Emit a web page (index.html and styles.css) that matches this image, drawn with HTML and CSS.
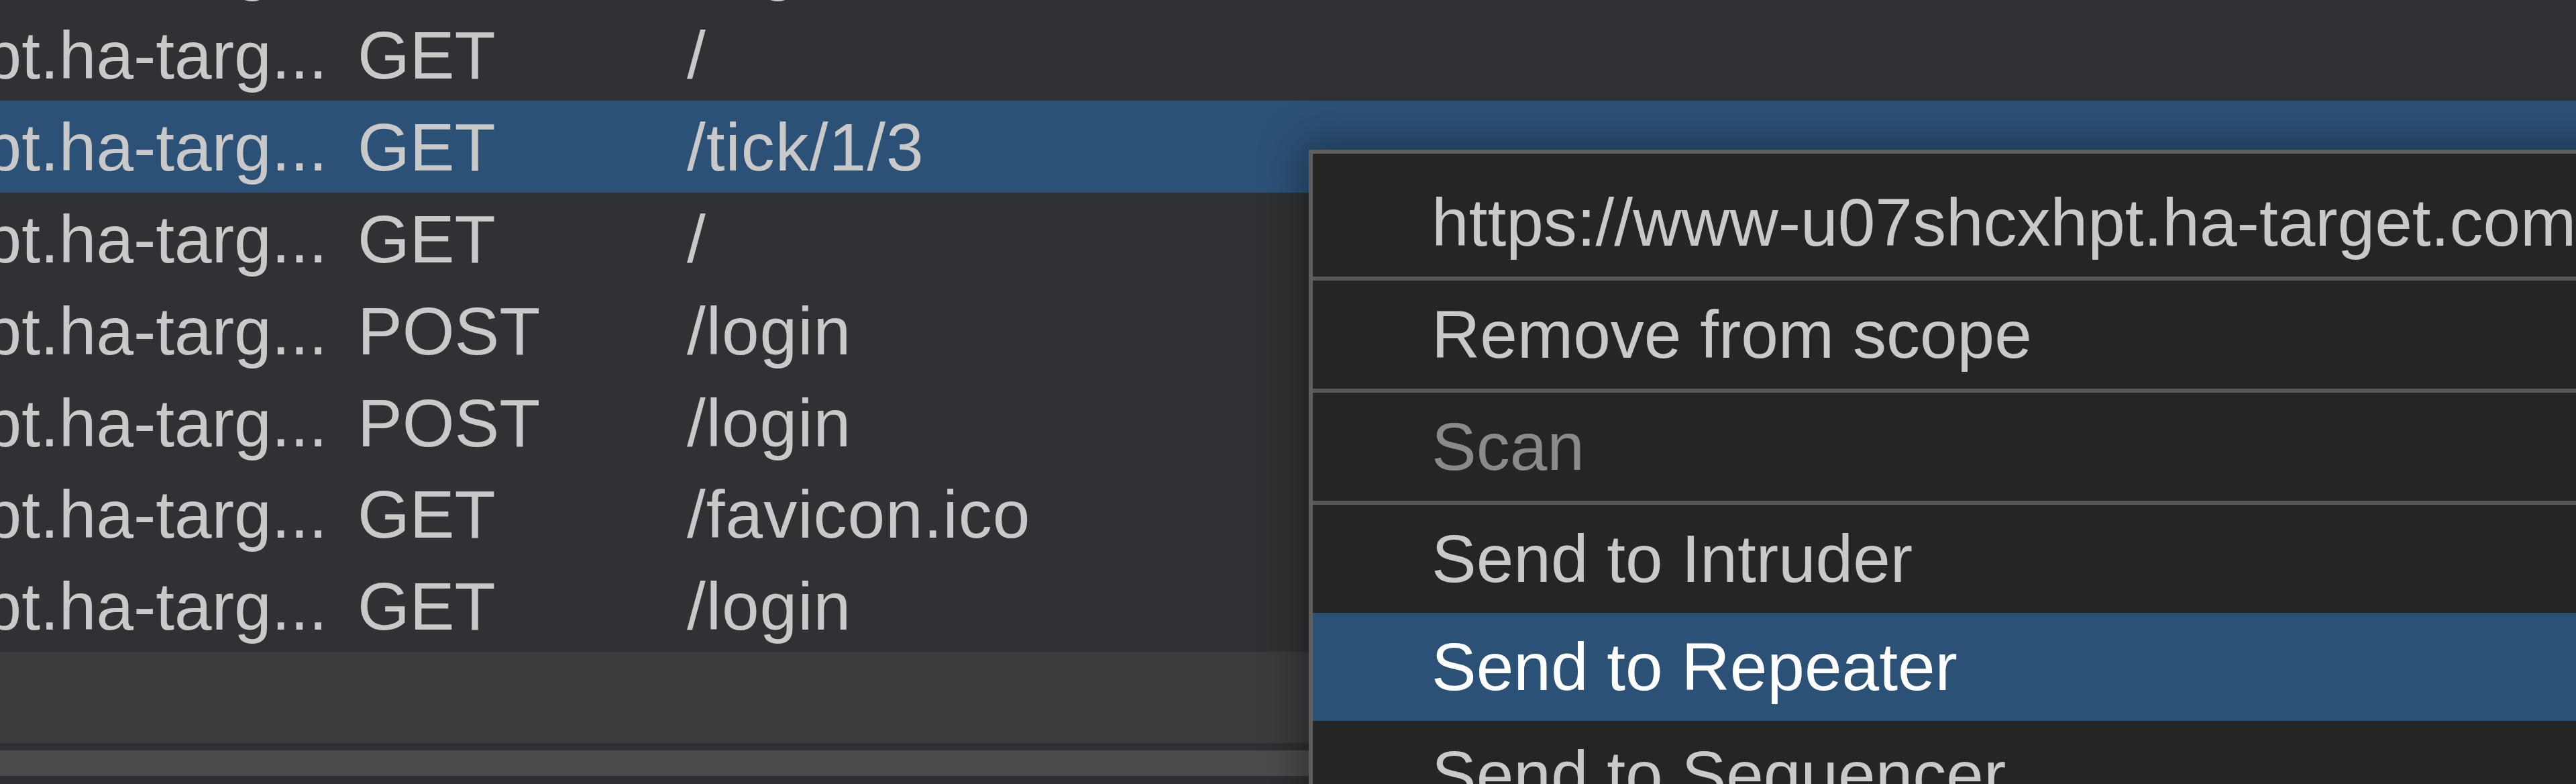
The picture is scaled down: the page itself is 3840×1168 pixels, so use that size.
FILE: index.html
```html
<!DOCTYPE html>
<html>
<head>
<meta charset="utf-8">
<link rel="stylesheet" href="styles.css">
</head>
<body>
<div class="app">
  <div class="table">
    <div class="rows">
      <div class="row"><div class="host"><span>https://www-u07shcxhpt.ha-targ...</span></div><div class="method">GET</div><div class="path">/login</div></div>
      <div class="row"><div class="host"><span>https://www-u07shcxhpt.ha-targ...</span></div><div class="method">GET</div><div class="path">/</div></div>
      <div class="row selected"><div class="host"><span>https://www-u07shcxhpt.ha-targ...</span></div><div class="method">GET</div><div class="path">/tick/1/3</div></div>
      <div class="row"><div class="host"><span>https://www-u07shcxhpt.ha-targ...</span></div><div class="method">GET</div><div class="path">/</div></div>
      <div class="row"><div class="host"><span>https://www-u07shcxhpt.ha-targ...</span></div><div class="method">POST</div><div class="path">/login</div></div>
      <div class="row"><div class="host"><span>https://www-u07shcxhpt.ha-targ...</span></div><div class="method">POST</div><div class="path">/login</div></div>
      <div class="row"><div class="host"><span>https://www-u07shcxhpt.ha-targ...</span></div><div class="method">GET</div><div class="path">/favicon.ico</div></div>
      <div class="row"><div class="host"><span>https://www-u07shcxhpt.ha-targ...</span></div><div class="method">GET</div><div class="path">/login</div></div>
    </div>
    <div class="empty"></div>
    <div class="gutter"></div>
    <div class="hscroll"></div>
  </div>

  <div class="menu">
    <div class="item">https://www-u07shcxhpt.ha-target.com</div>
    <div class="sep"></div>
    <div class="item">Remove from scope</div>
    <div class="sep"></div>
    <div class="item disabled">Scan</div>
    <div class="sep"></div>
    <div class="item">Send to Intruder</div>
    <div class="item active">Send to Repeater</div>
    <div class="item">Send to Sequencer</div>
  </div>
</div>
</body>
</html>
```

FILE: styles.css
```css
html, body {
  margin: 0;
  padding: 0;
}
body {
  width: 3840px;
  height: 1168px;
  overflow: hidden;
  background: #2f3033;
  font-family: "Liberation Sans", Arial, Helvetica, sans-serif;
  font-size: 100px;
  color: #c9c9c9;
}
.app {
  position: relative;
  width: 3840px;
  height: 1168px;
  overflow: hidden;
}
.table {
  display: flex;
  flex-direction: column;
  height: 1168px;
}
.rows {
  height: 971px;
  flex-shrink: 0;
  display: flex;
  flex-direction: column;
  justify-content: flex-end;
  overflow: hidden;
  background: #303134;
}
.row {
  flex-shrink: 0;
  height: 136.8px;
  box-sizing: border-box;
  padding-top: 2px;
  line-height: 134.8px;
  display: grid;
  grid-template-columns: 488px 446px 1fr;
  column-gap: 45px;
  white-space: nowrap;
  overflow: hidden;
}
.row.selected {
  background: #2c5177;
}
.host {
  display: flex;
  justify-content: flex-end;
  overflow: hidden;
}
.host span {
  flex-shrink: 0;
}
.path {
  letter-spacing: 1px;
}
.empty {
  height: 136px;
  flex-shrink: 0;
  background: #3a3b3d;
}
.gutter {
  height: 11px;
  flex-shrink: 0;
  background: #2f3033;
}
.hscroll {
  height: 38px;
  flex-shrink: 0;
  background: #4a4b4d;
}
.menu {
  position: absolute;
  left: 1951px;
  top: 223px;
  width: 2100px;
  height: 1100px;
  box-sizing: border-box;
  border: 6px solid #5f5f5f;
  background: #252525;
  padding-top: 22px;
  box-shadow: 0 0 60px 12px rgba(0, 0, 0, 0.32);
}
.item {
  height: 161px;
  line-height: 161px;
  padding-left: 177px;
  white-space: nowrap;
  color: #c9c9c9;
}
.item.disabled {
  color: #8a8a8a;
}
.item.active {
  background: #2c5177;
  color: #ffffff;
}
.sep {
  height: 6px;
  background: #575757;
}
```
